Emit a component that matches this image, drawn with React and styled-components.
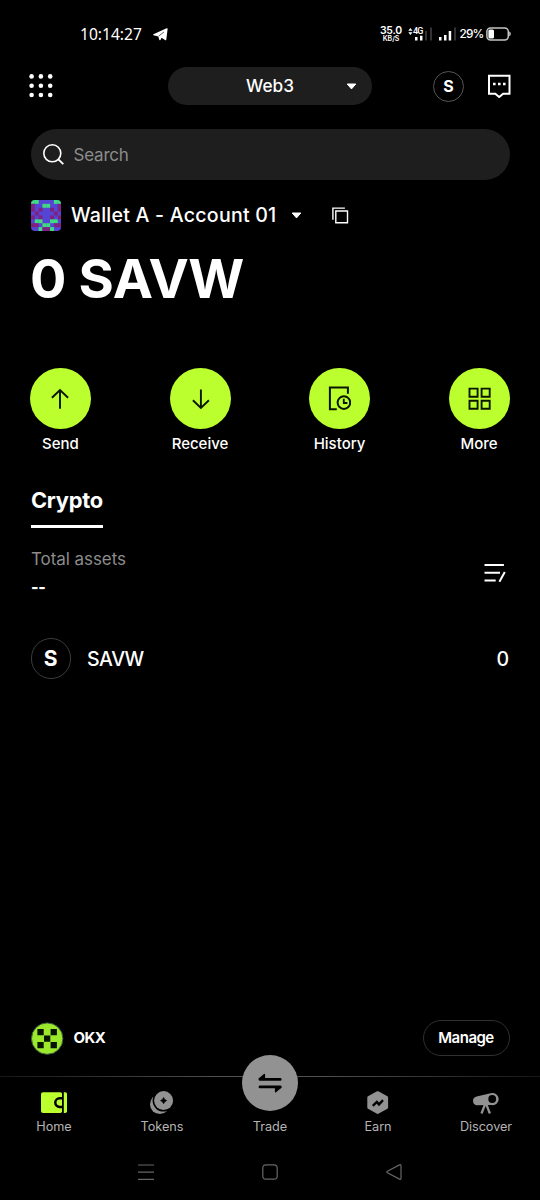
import styled, { createGlobalStyle } from "styled-components";

const GlobalStyle = createGlobalStyle`
* { box-sizing: border-box; }
body {
  margin: 0;
  background: #000;
  color: #fff;
  font-family: Inter, "Liberation Sans", sans-serif;
}
svg { display: block; flex: none; }
`

const Screen = styled.div`
  width: 540px;
  height: 1200px;
  background: #000;
  display: flex;
  flex-direction: column;
  overflow: hidden;
`

const Label = styled.span`
  font-size: ${(p) => p.$size}px;
  font-weight: ${(p) => p.$weight || 500};
  line-height: ${(p) => p.$line || 20}px;
  letter-spacing: ${(p) => p.$spacing || 0}px;
  color: ${(p) => p.$color || "#fff"};
  white-space: nowrap;
`

const StatusBar = styled.div`
  height: 60px;
  padding: 8px 29px 0 80px;
  display: flex;
  align-items: center;
`

const Clock = styled.span`
  font-family: "Noto Sans", sans-serif;
  font-size: 15.6px;
  line-height: 20px;
  width: 73px;
`

const StatusRight = styled.div`
  margin-left: auto;
  display: flex;
  align-items: center;
`

const Speed = styled.div`
  width: 22px;
  margin-right: 6px;
  display: flex;
  flex-direction: column;
  align-items: center;
  font-weight: 600;
`

const SpeedValue = styled.span`
  font-size: 10.5px;
  line-height: 9px;
  letter-spacing: -0.2px;
`

const SpeedUnit = styled.span`
  font-size: 7px;
  line-height: 8px;
`

const Percent = styled.span`
  flex: none;
  width: 29px;
  padding-left: 2.5px;
  font-size: 11.8px;
  font-weight: 500;
  line-height: 16px;
  letter-spacing: -0.8px;
`

const Header = styled.header`
  height: 52px;
  padding: 0 29px;
  display: grid;
  grid-template-columns: 139px 204px 1fr;
  align-items: center;
`

const ModePill = styled.button`
  height: 38px;
  padding: 0 15px 0 26px;
  border: 0;
  border-radius: 19px;
  background: #1e1e1e;
  color: #fff;
  font-family: inherit;
  display: flex;
  align-items: center;
  & > span { flex: 1; text-align: center; }
`

const HeaderRight = styled.div`
  display: flex;
  justify-content: flex-end;
  align-items: center;
  gap: 23px;
`

const Coin = styled.div`
  width: ${(p) => p.$size}px;
  height: ${(p) => p.$size}px;
  border: 1px solid ${(p) => p.$line};
  border-radius: 50%;
  display: flex;
  align-items: center;
  justify-content: center;
  font-size: ${(p) => p.$font}px;
  font-weight: 700;
`

const SearchBox = styled.div`
  height: 51px;
  margin: 17px 30.5px 0;
  padding-left: 12px;
  border-radius: 26px;
  background: #1e1e1e;
  display: flex;
  align-items: center;
  gap: 10px;
`

const AccountRow = styled.div`
  height: 31px;
  margin: 20px 31px 0 30.5px;
  display: flex;
  align-items: center;
`

const AccountName = styled.div`
  width: 230px;
  padding-left: 10px;
`

const CopyButton = styled.div`
  margin-left: 30px;
`

const Balance = styled.h1`
  margin: 18px 30px 0;
  font-size: 54px;
  font-weight: 700;
  line-height: 60px;
  letter-spacing: -0.35px;
`

const Actions = styled.div`
  margin: 59px 30.5px 0 30px;
  display: flex;
  justify-content: space-between;
`

const Action = styled.div`
  width: 61px;
  display: flex;
  flex-direction: column;
  align-items: center;
  gap: 5px;
`

const ActionCircle = styled.div`
  width: 61px;
  height: 61px;
  border-radius: 50%;
  background: #bcff2f;
  display: flex;
  align-items: center;
  justify-content: center;
`

const Tab = styled.div`
  width: 72px;
  height: 44px;
  margin: 30px 0 0 31px;
  border-bottom: 3px solid #fff;
`

const Assets = styled.div`
  margin: 21px 34px 0 31px;
  display: flex;
  justify-content: space-between;
  align-items: center;
`

const AssetTotals = styled.div`
  display: flex;
  flex-direction: column;
  gap: 8px;
`

const TokenRow = styled.div`
  height: 41px;
  margin: 41px 31px 0 30.5px;
  display: flex;
  align-items: center;
  gap: 16px;
  & > :last-child { margin-left: auto; }
`

const SiteRow = styled.div`
  height: 36px;
  margin: auto 30.5px 20px;
  display: flex;
  align-items: center;
  gap: 10px;
`

const ManageButton = styled.button`
  width: 87px;
  height: 36px;
  margin-left: auto;
  padding: 0;
  border: 1px solid #303030;
  border-radius: 18px;
  background: #000;
  font-family: inherit;
`

const Divider = styled.div`
  height: 1px;
  background: linear-gradient(90deg, #161616, #505050 40%, #505050 60%, #161616);
`

const TabBar = styled.nav`
  height: 67px;
  display: grid;
  grid-template-columns: repeat(5, 108px);
`

const NavItem = styled.div`
  position: relative;
  padding-top: 12px;
  display: flex;
  flex-direction: column;
  align-items: center;
`

const NavIcon = styled.div`
  width: 32px;
  height: 28px;
`

const TradeCircle = styled.div`
  position: absolute;
  top: -22px;
  width: 56px;
  height: 56px;
  border-radius: 50%;
  background: #929292;
  display: flex;
  align-items: center;
  justify-content: center;
`

const SystemNav = styled.div`
  height: 56px;
  padding: 0 138px 0 137.5px;
  display: flex;
  align-items: center;
  justify-content: space-between;
`

const green = "#3fdc80"
const plum = "#80207f"
const avatarCells = [
  "gg....gg",
  "p..gg..p",
  "p.p..p.p",
  ".p....p.",
  "p.p..p.p",
  ".gg..gg.",
  "pp.gg.pp",
  "..gppg..",
]

const AvatarSvg = styled.svg`
  border-radius: 4px;
`

const Avatar = () => (
  <AvatarSvg width="30.5" height="31" viewBox="0 0 8 8" preserveAspectRatio="none">
    <rect width="8" height="8" fill="#5545d4" />
    {avatarCells.map((row, y) =>
      row.split("").map((c, x) =>
        c === "." ? null : <rect key={x + "-" + y} x={x} y={y} width="1.02" height="1" fill={c === "g" ? green : plum} />
      )
    )}
  </AvatarSvg>
)

const Caret = () => (
  <svg width="11" height="7" viewBox="0 0 11 7">
    <path d="M1.2 1h8.6L5.5 5.9z" fill="#fff" stroke="#fff" strokeWidth="1" strokeLinejoin="round" />
  </svg>
)

const TelegramIcon = () => (
  <svg width="15" height="13" viewBox="0 0 15 13">
    <path d="M.4 6.3 13.6.3q1.2-.4 1 .8l-1.3 10.6q-.3 1-1.3.4L8.6 9.8 7.4 11.9q-.9.7-1.2-.4L5.3 8.4.5 7.3q-.6-.4-.1-1z" fill="#fff" />
    <path d="M5.6 8.2 11 3.9" stroke="#000" strokeWidth=".6" />
  </svg>
)

const Signals = () => (
  <svg width="49" height="14" viewBox="0 0 49 14" fill="#fff">
    <path d="M.3 3.7 2.4 1l2.1 2.7zM.3 5.2l2.1 2.7 2.1-2.7z" />
    <text x="5" y="7.3" fontSize="9" fontWeight="500" letterSpacing="-.8" fontFamily="Roboto, sans-serif">4G</text>
    <path d="M7 10h2.5v3.5H7zM12 8.7h2.5v4.8H12zM31 10h2.5v3.5H31zM36 8h2.5v5.5H36zM40.7 4h2.5v9.5h-2.5z" />
    <path d="M17 4h2v9.5h-2zM22 .5h2v13h-2zM46 .5h2v13h-2z" fill="#333" />
  </svg>
)

const Battery = () => (
  <svg width="25" height="14" viewBox="0 0 25 14">
    <rect x=".9" y=".9" width="21.4" height="12" rx="3.6" fill="none" stroke="#c4c4c4" strokeWidth="1.5" />
    <rect x="2.4" y="2.4" width="5.6" height="9" rx="1.5" fill="#fff" />
    <path d="M23.2 4.6q1.6.5 1.6 2.3t-1.6 2.3z" fill="#c9c9c9" />
  </svg>
)

const DotsIcon = () => (
  <svg width="24" height="24" viewBox="0 0 24 24" fill="#fff">
    {[2.4, 11.7, 21].map((y) => [2.6, 11.9, 21.2].map((x) => <circle key={x + "-" + y} cx={x} cy={y} r="2.3" />))}
  </svg>
)

const ChatIcon = () => (
  <svg width="24" height="24" viewBox="0 0 24 24">
    <path d="M2 1.7h20.5v18h-6.4l-3.9 3.3-3.9-3.3H2z" fill="none" stroke="#fff" strokeWidth="2" />
    <path d="M6 8.7h2.6v2.6H6zM11 8.7h2.6v2.6H11zM16 8.7h2.6v2.6H16z" fill="#fff" />
  </svg>
)

const SearchIcon = () => (
  <svg width="21" height="21" viewBox="0 0 21 21" fill="none" stroke="#fff" strokeWidth="1.6">
    <circle cx="9.3" cy="9.3" r="8.5" />
    <path d="m15.4 15.4 4.9 4.7" strokeWidth="1.9" />
  </svg>
)

const CopyIcon = () => (
  <svg width="17" height="17" viewBox="0 0 17 17" fill="none" stroke="#fff" strokeWidth="1.4">
    <path d="M3.8 4h11.7v11.7H3.8z" />
    <path d="M.9 12.7V1.1h12" />
  </svg>
)

const SendIcon = () => (
  <svg width="19" height="22" viewBox="0 0 19 22" fill="none" stroke="#0b1600" strokeWidth="1.9">
    <path d="M9 20.7V1.8M.9 9.8l8.1-7.7 8.1 7.7" />
  </svg>
)

const ReceiveIcon = () => (
  <svg width="19" height="22" viewBox="0 0 19 22" fill="none" stroke="#0b1600" strokeWidth="1.9">
    <path d="M9.9 1.6V20M1.9 12.3l8 7.6 8-7.6" />
  </svg>
)

const HistoryIcon = () => (
  <svg width="23" height="25" viewBox="0 0 23 25" fill="none" stroke="#0b1600" strokeWidth="2">
    <path d="M8.8 23.3H1.9V1.5h18v6.3" />
    <circle cx="15.9" cy="16.6" r="6.3" />
    <path d="M15.8 12.8v4.2h3.6" strokeWidth="1.8" />
  </svg>
)

const MoreIcon = () => (
  <svg width="23" height="23" viewBox="0 0 23 23" fill="none" stroke="#0b1600" strokeWidth="1.9">
    <path d="M1.5 1.6h8.1v8.1H1.5zM13.6 1.6h8.1v8.1h-8.1zM1.5 13.7h8.1v8.1H1.5zM13.6 13.7h8.1v8.1h-8.1z" />
  </svg>
)

const ListIcon = () => (
  <svg width="22" height="20" viewBox="0 0 22 20" fill="none" stroke="#fff" strokeWidth="2">
    <path d="M.5 2h19.4M.5 9.8H16M.5 17.5h11.2M20.8 9l-5.4 9.8" />
  </svg>
)

const OkxIcon = () => (
  <svg width="33" height="33" viewBox="0 0 33 33">
    <circle cx="16.2" cy="16.6" r="15.7" fill="#9be82d" stroke="#3d5f3f" strokeWidth="1" />
    <path d="M6.4 7h6.3v6.3H6.4zM19.6 7h6.3v6.3h-6.3zM13 13.5h6.3v6.3H13zM6.4 20h6.3v6.3H6.4zM19.6 20h6.3v6.3h-6.3z" fill="#081400" />
  </svg>
)

const WalletIcon = () => (
  <svg width="32" height="28" viewBox="0 0 32 28">
    <rect x="3" y="3.2" width="21.2" height="20.8" rx="2" fill="#bcff2f" />
    <path d="M25.5 3.2h1.8q1.7 0 1.7 1.7v17.4q0 1.7-1.7 1.7h-1.8z" fill="#bcff2f" />
    <path d="M24.8 9.3h-3.2a4.3 4.3 0 0 0 0 8.6h3.2" fill="none" stroke="#000" strokeWidth="2.5" />
    <path d="M24.8 2v24" stroke="#000" strokeWidth="1.6" />
  </svg>
)

const TokensIcon = () => (
  <svg width="32" height="28" viewBox="0 0 32 28">
    <circle cx="13.8" cy="15.2" r="9.8" fill="#929292" />
    <circle cx="17.6" cy="11.6" r="11" fill="#000" />
    <circle cx="17.6" cy="11.6" r="9.5" fill="#929292" />
    <path d="M17.6 8.5q.8 2.3 3.1 3.1-2.3.8-3.1 3.1-.8-2.3-3.1-3.1 2.3-.8 3.1-3.1z" fill="#000" stroke="#000" strokeWidth=".6" />
  </svg>
)

const EarnIcon = () => (
  <svg width="32" height="28" viewBox="0 0 32 28">
    <path d="M15.7 3.5 24.8 8.4v10.2l-9.1 5-9.1-5V8.4z" fill="#929292" stroke="#929292" strokeWidth="2.6" strokeLinejoin="round" />
    <path d="m10.8 16.8 4-3.9 2.2 2.5 4-4.2" fill="none" stroke="#000" strokeWidth="2.4" />
  </svg>
)

const DiscoverIcon = () => (
  <svg width="32" height="28" viewBox="0 0 32 28">
    <path d="M6.6 7.4 20.6 4.3a6.1 6.1 0 1 1 1.2 11.8L6.6 16.2Q3 15.8 3 11.8 3 8.4 6.6 7.4z" fill="#929292" />
    <circle cx="22.2" cy="10" r="3.9" fill="#000" />
    <path d="m15.2 14.9-3.7 9.6M16.1 14.9l3.8 9.6" fill="none" stroke="#929292" strokeWidth="2.3" />
  </svg>
)

const TradeIcon = () => (
  <svg width="24" height="20" viewBox="0 0 24 20">
    <path d="M1.9 6.4h20.4M1.9 13.9h20.4" fill="none" stroke="#000" strokeWidth="2.6" strokeLinecap="round" />
    <path d="M1.3 5.9 6.4 1.5v5.1zM22.7 14.4l-5.1 4.4v-5.1z" fill="#000" stroke="#000" strokeWidth="1.4" strokeLinejoin="round" />
  </svg>
)

const SystemIcon = ({ d }) => (
  <svg width="16" height="16" viewBox="0 0 16 16" fill="none" stroke="#666" strokeWidth="1.2">
    <path d={d} />
  </svg>
)

const actions = [
  { name: "Send", icon: <SendIcon /> },
  { name: "Receive", icon: <ReceiveIcon /> },
  { name: "History", icon: <HistoryIcon /> },
  { name: "More", icon: <MoreIcon /> },
]

const navItems = [
  { name: "Home", icon: <WalletIcon /> },
  { name: "Tokens", icon: <TokensIcon /> },
  { name: "Trade", trade: true },
  { name: "Earn", icon: <EarnIcon /> },
  { name: "Discover", icon: <DiscoverIcon /> },
]

const App = () => {
  return (
    <>
      <GlobalStyle />
      <Screen>
        <StatusBar>
          <Clock>10:14:27</Clock>
          <TelegramIcon />
          <StatusRight>
            <Speed>
              <SpeedValue>35.0</SpeedValue>
              <SpeedUnit>KB/S</SpeedUnit>
            </Speed>
            <Signals />
            <Percent>29%</Percent>
            <Battery />
          </StatusRight>
        </StatusBar>

        <Header>
          <DotsIcon />
          <ModePill>
            <Label $size={17.2}>Web3</Label>
            <Caret />
          </ModePill>
          <HeaderRight>
            <Coin $size={31} $line="#555" $font={16}>S</Coin>
            <ChatIcon />
          </HeaderRight>
        </Header>

        <SearchBox>
          <SearchIcon />
          <Label $size={17} $weight={400} $spacing={-0.2} $color="#8c8c8c">Search</Label>
        </SearchBox>

        <AccountRow>
          <Avatar />
          <AccountName>
            <Label $size={19.6} $spacing={0.22}>Wallet A - Account 01</Label>
          </AccountName>
          <Caret />
          <CopyButton>
            <CopyIcon />
          </CopyButton>
        </AccountRow>

        <Balance>0 SAVW</Balance>

        <Actions>
          {actions.map((a) => (
            <Action key={a.name}>
              <ActionCircle>{a.icon}</ActionCircle>
              <Label $size={15}>{a.name}</Label>
            </Action>
          ))}
        </Actions>

        <Tab>
          <Label $size={21.8} $weight={700} $line={32} $spacing={-0.25}>Crypto</Label>
        </Tab>

        <Assets>
          <AssetTotals>
            <Label $size={17} $weight={400} $spacing={-0.07} $color="#8c8c8c">Total assets</Label>
            <Label $size={16} $weight={800} $spacing={-0.4}>--</Label>
          </AssetTotals>
          <ListIcon />
        </Assets>

        <TokenRow>
          <Coin $size={40.5} $line="#3c3c3c" $font={21}>S</Coin>
          <Label $size={19.6} $spacing={-0.45}>SAVW</Label>
          <Label $size={19.5}>0</Label>
        </TokenRow>

        <SiteRow>
          <OkxIcon />
          <Label $size={15} $weight={700} $spacing={-0.5} $line={22}>OKX</Label>
          <ManageButton>
            <Label $size={15} $weight={600} $spacing={-0.5}>Manage</Label>
          </ManageButton>
        </SiteRow>
        <Divider />
        <TabBar>
          {navItems.map((n) => (
            <NavItem key={n.name}>
              {n.trade && (
                <TradeCircle>
                  <TradeIcon />
                </TradeCircle>
              )}
              <NavIcon>{n.icon}</NavIcon>
              <Label $size={12.7} $weight={400} $spacing={-0.05} $color="#b4b4b4">{n.name}</Label>
            </NavItem>
          ))}
        </TabBar>
        <SystemNav>
          <SystemIcon d="M0 1h16M0 8.2h16M0 15.4h16" />
          <SystemIcon d="M4 .8h8q3.2 0 3.2 3.2v8q0 3.2-3.2 3.2H4Q.8 15.2.8 12V4Q.8.8 4 .8z" />
          <SystemIcon d="M13.5.9Q15 .2 15 1.8v12.4q0 1.6-1.5.9L1.4 8.8q-1.2-.8 0-1.6z" />
        </SystemNav>
      </Screen>
    </>
  )
}
export default App;
